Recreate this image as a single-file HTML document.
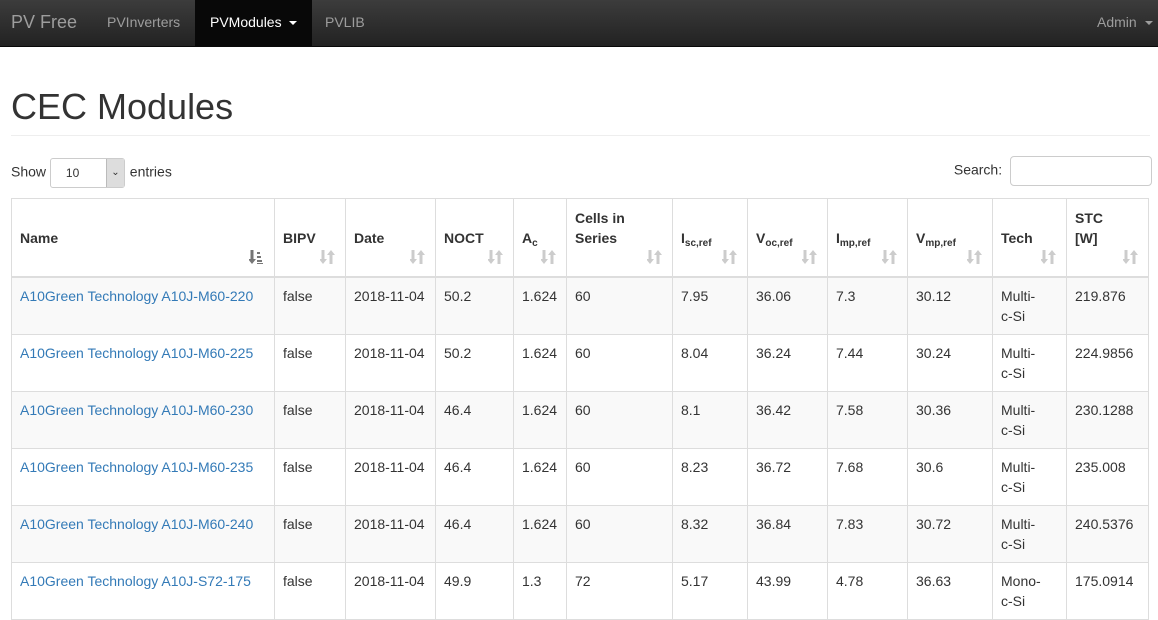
<!DOCTYPE html>
<html><head><style>
*{box-sizing:border-box}
body{margin:0;font-family:"Liberation Sans",Arial,sans-serif;font-size:14px;line-height:20px;color:#333;background:#fff;overflow:hidden;width:1158px;height:593px}
.nav{height:47px;background:linear-gradient(#3c3c3c,#222);border-bottom:1px solid #080808;position:relative}
.nav a{position:absolute;top:0;height:46px;line-height:44px;color:#9d9d9d;text-decoration:none}
.brand{left:11px;font-size:18px}
.act{background:#080808;color:#fff!important;padding:0 15px}
.caret{display:inline-block;width:0;height:0;border-top:4px solid;border-left:4px solid transparent;border-right:4px solid transparent;vertical-align:middle;margin-left:4px}
.wrap{padding:0 8px 0 11px}
h1{font-size:36px;font-weight:500;margin:0;padding:41px 0 9px;line-height:38px;border-bottom:1px solid #eee}
.ctl{position:relative;height:62px}
.show{position:absolute;left:0;top:22px}
.sel{display:inline-block;width:75px;height:30px;border:1px solid #ccc;border-radius:3px;vertical-align:middle;margin:0 1px 0 0;position:relative;font-size:12px;padding-left:15px;line-height:28px}
.sel span{position:absolute;right:0;top:0;width:18px;height:28px;background:#ddd;border-left:1px solid #bbb;text-align:center;font-size:10px}
.search{position:absolute;right:-2px;top:20px}
.search i{display:inline-block;width:142px;height:30px;border:1px solid #ccc;border-radius:4px;vertical-align:middle;margin-left:4px}
table{border-collapse:collapse;table-layout:fixed;width:1137px}
td,th{border:1px solid #ddd;padding:8px;text-align:left;vertical-align:top}
th{vertical-align:bottom;padding:8px 8px 28px 8px;position:relative;border-bottom:2px solid #ddd;height:78px}
th svg{position:absolute;right:10px;bottom:12px}
th sub{font-size:10px;vertical-align:-3px;line-height:0}
tbody tr:nth-child(odd){background:#f9f9f9}
td a{color:#337ab7;text-decoration:none}
</style></head><body>
<svg width="0" height="0" style="position:absolute"><defs>
<g id="s"><path d="M1 0h3v9h2.5l-4 5-4-5H1z M9 14h3V5h2.5l-4-5-4 5H9z" fill="#ccc" transform="translate(0.5,0)"/></g>
<g id="n"><path d="M1 0h3v9h2.5l-4 5-4-5H1z" fill="#777" transform="translate(0.5,0)"/><path d="M8 2h3v2H8zM8 6h4v2H8zM8 10h5v2H8zM8 13h6v1H8z" fill="#777"/></g>
</defs></svg>
<div class="nav">
<a class="brand">PV Free</a>
<a style="left:107px">PVInverters</a>
<a class="act" style="left:195px">PVModules <b class="caret"></b></a>
<a style="left:325px">PVLIB</a>
<a style="left:1097px">Admin <b class="caret"></b></a>
</div>
<div class="wrap">
<h1>CEC Modules</h1>
<div class="ctl"><div class="show">Show <span class="sel">10<span>⌄</span></span> entries</div><div class="search">Search: <i></i></div></div>
<table>
<colgroup><col style="width:263px"><col style="width:71px"><col style="width:90px"><col style="width:78px"><col style="width:53px"><col style="width:106px"><col style="width:75px"><col style="width:80px"><col style="width:80px"><col style="width:85px"><col style="width:74px"><col style="width:82px"></colgroup>
<thead><tr>
<th>Name<svg width="15" height="14"><use href="#n"/></svg></th>
<th>BIPV<svg width="15" height="14"><use href="#s"/></svg></th>
<th>Date<svg width="15" height="14"><use href="#s"/></svg></th>
<th>NOCT<svg width="15" height="14"><use href="#s"/></svg></th>
<th>A<sub>c</sub><svg width="15" height="14"><use href="#s"/></svg></th>
<th>Cells in Series<svg width="15" height="14"><use href="#s"/></svg></th>
<th>I<sub>sc,ref</sub><svg width="15" height="14"><use href="#s"/></svg></th>
<th>V<sub>oc,ref</sub><svg width="15" height="14"><use href="#s"/></svg></th>
<th>I<sub>mp,ref</sub><svg width="15" height="14"><use href="#s"/></svg></th>
<th>V<sub>mp,ref</sub><svg width="15" height="14"><use href="#s"/></svg></th>
<th>Tech<svg width="15" height="14"><use href="#s"/></svg></th>
<th>STC<br>[W]<svg width="15" height="14"><use href="#s"/></svg></th>
</tr></thead>
<tbody>
<tr><td><a>A10Green Technology A10J-M60-220</a></td><td>false</td><td>2018-11-04</td><td>50.2</td><td>1.624</td><td>60</td><td>7.95</td><td>36.06</td><td>7.3</td><td>30.12</td><td>Multi-<br>c-Si</td><td>219.876</td></tr>
<tr><td><a>A10Green Technology A10J-M60-225</a></td><td>false</td><td>2018-11-04</td><td>50.2</td><td>1.624</td><td>60</td><td>8.04</td><td>36.24</td><td>7.44</td><td>30.24</td><td>Multi-<br>c-Si</td><td>224.9856</td></tr>
<tr><td><a>A10Green Technology A10J-M60-230</a></td><td>false</td><td>2018-11-04</td><td>46.4</td><td>1.624</td><td>60</td><td>8.1</td><td>36.42</td><td>7.58</td><td>30.36</td><td>Multi-<br>c-Si</td><td>230.1288</td></tr>
<tr><td><a>A10Green Technology A10J-M60-235</a></td><td>false</td><td>2018-11-04</td><td>46.4</td><td>1.624</td><td>60</td><td>8.23</td><td>36.72</td><td>7.68</td><td>30.6</td><td>Multi-<br>c-Si</td><td>235.008</td></tr>
<tr><td><a>A10Green Technology A10J-M60-240</a></td><td>false</td><td>2018-11-04</td><td>46.4</td><td>1.624</td><td>60</td><td>8.32</td><td>36.84</td><td>7.83</td><td>30.72</td><td>Multi-<br>c-Si</td><td>240.5376</td></tr>
<tr><td><a>A10Green Technology A10J-S72-175</a></td><td>false</td><td>2018-11-04</td><td>49.9</td><td>1.3</td><td>72</td><td>5.17</td><td>43.99</td><td>4.78</td><td>36.63</td><td>Mono-<br>c-Si</td><td>175.0914</td></tr>
</tbody></table>
</div>
</body></html>
